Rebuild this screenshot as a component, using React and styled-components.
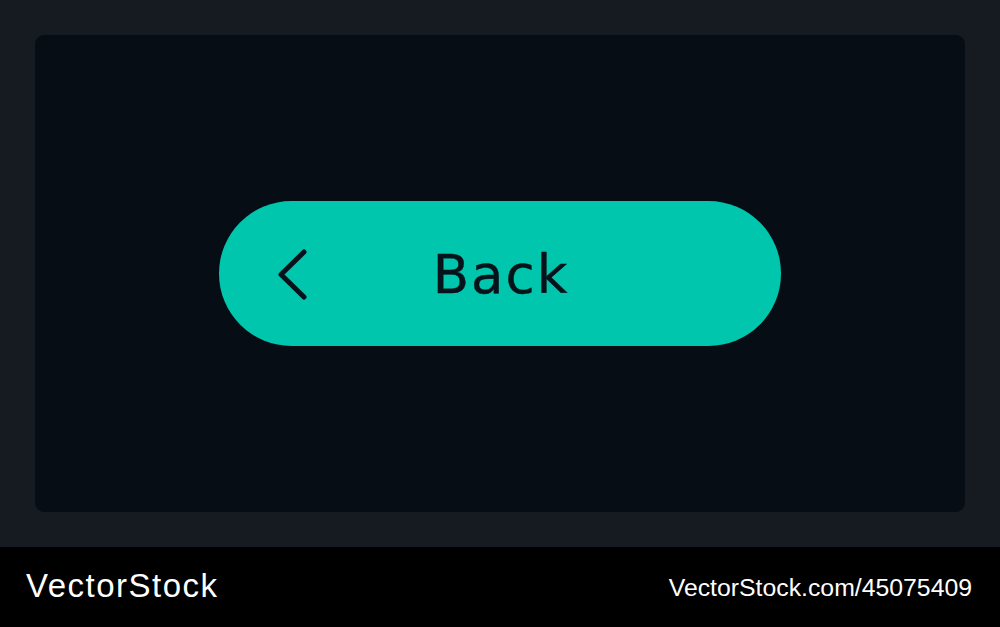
import React from 'react';
import styled, { createGlobalStyle } from 'styled-components';

const GlobalStyle = createGlobalStyle`
	html, body {
		margin: 0;
		padding: 0;
		background: #161b22;
	}
	* { box-sizing: border-box; }
`;

const Page = styled.div`
	display: flex;
	flex-direction: column;
	width: 1000px;
	height: 627px;
	background: #161b22;
`;

const Stage = styled.div`
	display: flex;
	height: 547px;
	padding: 35px;
`;

const Panel = styled.div`
	flex: 1;
	display: flex;
	align-items: center;
	justify-content: center;
	background: #070d14;
	border-radius: 9px;
`;

const BackButton = styled.button`
	position: relative;
	display: flex;
	align-items: center;
	justify-content: center;
	width: 562px;
	height: 145px;
	padding: 0;
	border: none;
	border-radius: 73px;
	background: #00c6ae;
	color: #07131a;
	cursor: pointer;
`;

const Chevron = styled.svg`
	position: absolute;
	left: 58px;
	top: 46px;
	width: 34px;
	height: 54px;
`;

const Label = styled.span`
	font-family: "DejaVu Sans", sans-serif;
	font-size: 53px;
	font-weight: 400;
	letter-spacing: 2px;
	line-height: 1;
	margin: 2px 0 0 2px;
	-webkit-text-stroke: 0.4px #07131a;
`;

const Footer = styled.div`
	display: flex;
	align-items: center;
	justify-content: space-between;
	height: 80px;
	padding: 0 28px 0 26px;
	background: #000;
	color: #fff;
	font-family: "Liberation Sans", Arial, sans-serif;
`;

const Brand = styled.span`
	font-size: 33px;
	letter-spacing: 1.5px;
	margin-top: -3px;
`;

const Ref = styled.span`
	font-size: 24.8px;
	margin-top: 2px;
`;

export default function App() {
	return (
		<>
			<GlobalStyle />
			<Page>
				<Stage>
					<Panel>
						<BackButton>
							<Chevron viewBox="0 0 34 54" fill="none">
								<path
									d="M27 5 L4 27.5 L27 50"
									stroke="#07131a"
									strokeWidth="5"
									strokeLinecap="round"
									strokeLinejoin="round"
								/>
							</Chevron>
							<Label>Back</Label>
						</BackButton>
					</Panel>
				</Stage>
				<Footer>
					<Brand>VectorStock</Brand>
					<Ref>VectorStock.com/45075409</Ref>
				</Footer>
			</Page>
		</>
	);
}
